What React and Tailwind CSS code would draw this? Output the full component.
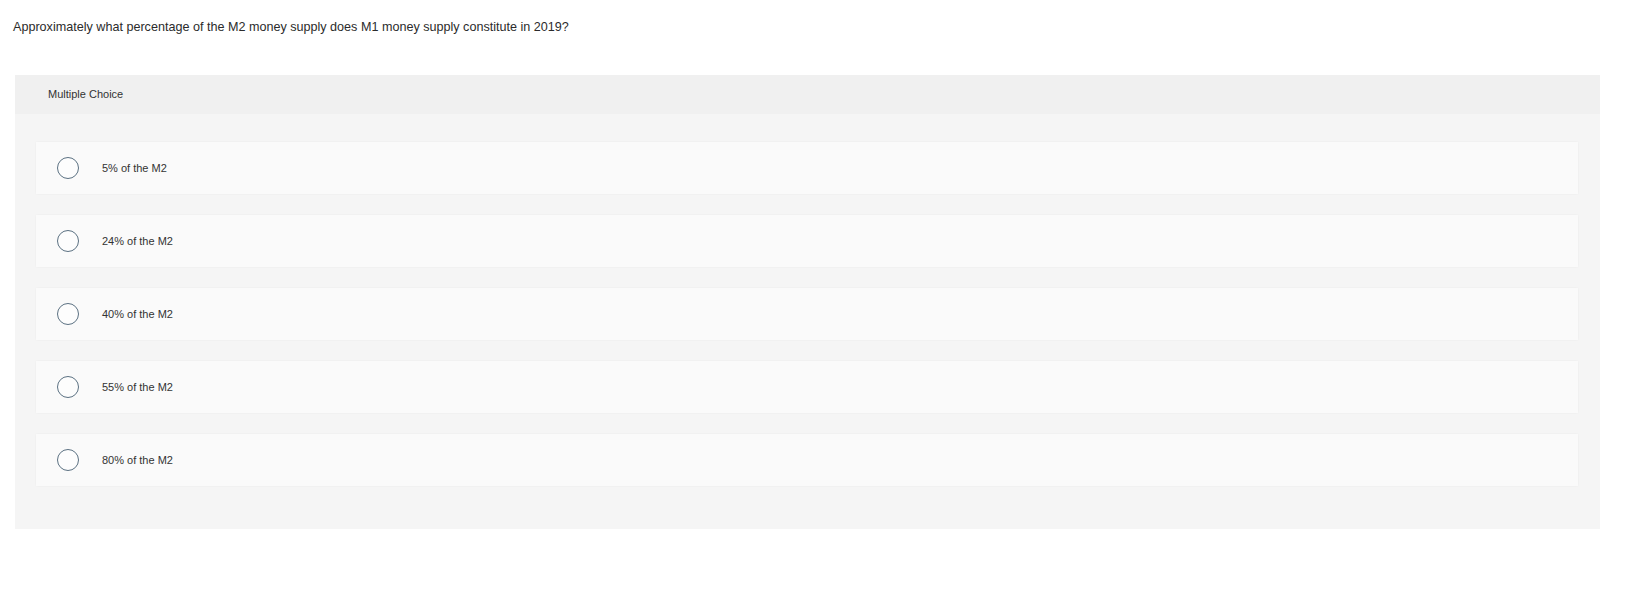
import React from "react";

const choices = ["5% of the M2", "24% of the M2", "40% of the M2", "55% of the M2", "80% of the M2"];

export default function App() {
    return (
        <div className="min-h-[590px] w-full bg-white text-[#333] font-['Liberation_Sans',Arial,sans-serif]">
            <p className="pl-[13px] pt-[18px] text-[12.6px] leading-[18px] text-[#2b2b2b]">
                Approximately what percentage of the M2 money supply does M1 money supply constitute in 2019?
            </p>

            <div className="ml-[15px] mr-[26px] mt-[39px]">
                <div className="h-[39px] flex items-center pl-[33px] bg-[#f0f0f0] text-[11px] text-[#333]">
                    Multiple Choice
                </div>

                <div className="bg-[#f5f5f5] pt-[28px] pb-[43px] pl-[21px] pr-[22px] flex flex-col gap-[21px]">
                    {choices.map(choice => (
                        <div
                            key={choice}
                            className="h-[52px] flex items-center pl-[21px] gap-[23px] bg-[#fafafa] shadow-[0_0_2px_rgba(0,0,0,0.05)]"
                        >
                            <span className="w-[22px] h-[22px] rounded-full border-[1.5px] border-[#5b7182] bg-[#fdfdfd] shrink-0" />
                            <span className="text-[11px] text-[#333]">{choice}</span>
                        </div>
                    ))}
                </div>
            </div>
        </div>
    )
}
